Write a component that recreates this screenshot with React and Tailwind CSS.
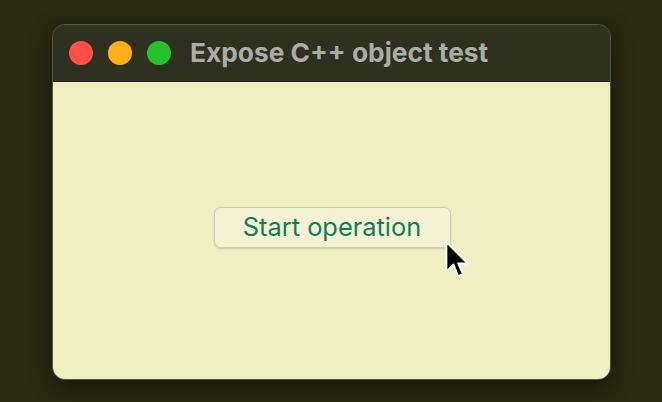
import React from 'react';

const Cursor = () => (
  <svg width="26" height="40" viewBox="0 0 22 34" className="absolute left-[444px] top-[241px]">
    <path d="M2 1 L2 26 L8 20 L12 30 L16 28 L12 19 L20 19 Z" fill="#000" stroke="#fff" strokeWidth="1.6" strokeLinejoin="round" />
  </svg>
);

export default function App() {
  return (
    <div className="relative w-[662px] h-[402px] bg-[#2a2a12] pt-[24px] pl-[52px] overflow-hidden" style={{ fontFamily: 'Inter, "Liberation Sans", sans-serif' }}>
      <div className="w-[559px] h-[356px] rounded-[13px] overflow-hidden flex flex-col border border-[#55573f] shadow-[0_6px_20px_rgba(0,0,0,0.5)]">
        <div className="h-[57px] bg-[#2e3120] flex items-center pl-[16px] gap-[15px] border-b border-[#1e1f14]">
          <span className="w-[24px] h-[24px] rounded-full bg-[#ff5045]" />
          <span className="w-[24px] h-[24px] rounded-full bg-[#ffb019]" />
          <span className="w-[24px] h-[24px] rounded-full bg-[#27c22a]" />
          <span className="ml-[4px] text-[26.3px] leading-none font-bold text-[#acaca6]">Expose C++ object test</span>
        </div>
        <div className="flex-1 bg-[#f0efc4] flex justify-center pt-[125px]">
          <button className="ml-[1px] w-[237px] h-[41px] rounded-[7px] bg-[#f3f3d3] border border-[#cfcfb2] shadow-[0_1px_2px_rgba(0,0,0,0.15)] text-[25.4px] text-[#157a5c] leading-none pb-[2px]">
            Start operation
          </button>
        </div>
      </div>
      <Cursor />
    </div>
  );
}
